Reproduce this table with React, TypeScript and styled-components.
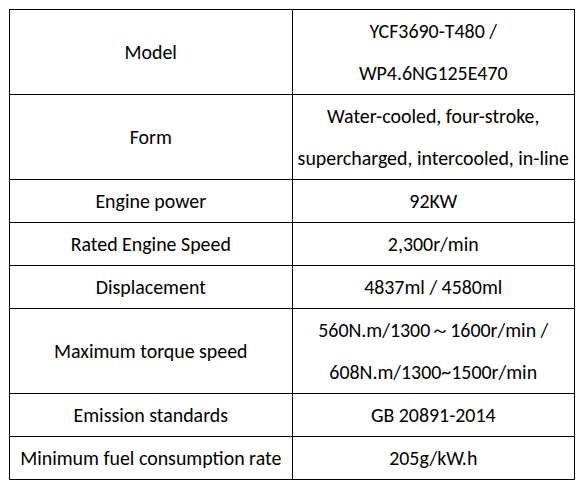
import React from "react";
import styled, { createGlobalStyle } from "styled-components";

const Global = createGlobalStyle`
  html, body { margin: 0; padding: 0; background: #ffffff; }
`;

const Page = styled.div`
  padding: 9px 0 0 9px;
`;

const Table = styled.table`
  border-collapse: collapse;
  width: 566px;
  table-layout: fixed;
  font-family: Carlito, Lato, "Liberation Sans", sans-serif;
  font-size: 19.9px;
  color: #000;
`;

const Cell = styled.td`
  border: 1px solid #000;
  padding: 0;
  text-align: center;
  vertical-align: middle;
  line-height: 42px;
  white-space: nowrap;
`;

const Line = styled.div`
  line-height: 42px;
`;

const rows: { label: string; value: string[] }[] = [
  { label: "Model", value: ["YCF3690-T480 /", "WP4.6NG125E470"] },
  { label: "Form", value: ["Water-cooled, four-stroke,", "supercharged, intercooled, in-line"] },
  { label: "Engine power", value: ["92KW"] },
  { label: "Rated Engine Speed", value: ["2,300r/min"] },
  { label: "Displacement", value: ["4837ml / 4580ml"] },
  { label: "Maximum torque speed", value: ["560N.m/1300～1600r/min /", "608N.m/1300~1500r/min"] },
  { label: "Emission standards", value: ["GB 20891-2014"] },
  { label: "Minimum fuel consumption rate", value: ["205g/kW.h"] },
];

export default function App() {
  return (
    <>
      <Global />
      <Page>
        <Table>
          <tbody>
            {rows.map((r) => (
              <tr key={r.label}>
                <Cell>{r.label}</Cell>
                <Cell>
                  {r.value.map((v) => (
                    <Line key={v}>{v}</Line>
                  ))}
                </Cell>
              </tr>
            ))}
          </tbody>
        </Table>
      </Page>
    </>
  );
}
